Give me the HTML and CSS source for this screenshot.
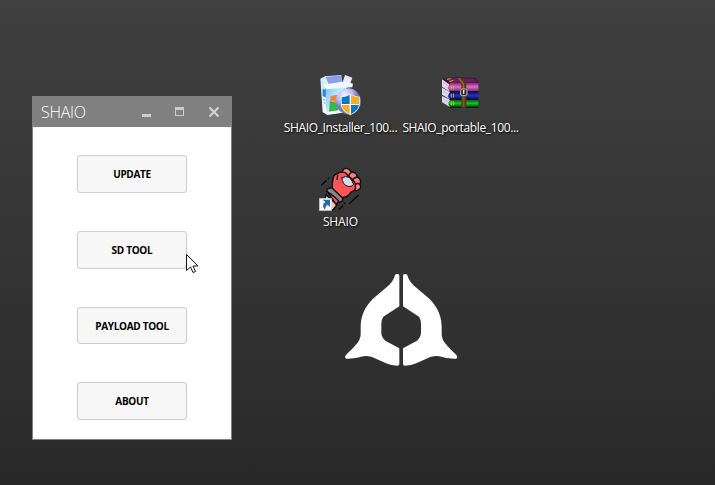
FILE: index.html
```html
<!DOCTYPE html>
<html lang="en">
<head>
<meta charset="utf-8">
<title>SHAIO</title>
<link rel="stylesheet" href="styles.css">
</head>
<body>
<main class="desktop">
  <section class="window">
    <header class="titlebar">
      <h1 class="title">SHAIO</h1>
      <svg class="controls" width="80" height="30" viewBox="0 0 80 30">
        <path fill="#ccc" d="M2 18h9v3H2zM35 11h9v9h-9zM36 14v5h7v-5z" fill-rule="evenodd"/>
        <path d="M69.500 11.500l9 9m0-9l-9 9" stroke="#d2d2d2" stroke-width="2.200"/>
      </svg>
    </header>
    <div class="actions">
      <button class="action">UPDATE</button>
      <button class="action">SD TOOL</button>
      <button class="action short">PAYLOAD TOOL</button>
      <button class="action">ABOUT</button>
    </div>
  </section>

  <figure class="item installer">
    <svg width="60" height="50" viewBox="0 0 180 150">
      <defs>
        <linearGradient id="box" x2="1" y2="1"><stop stop-color="#67b9fa"/><stop offset=".5" stop-color="#c5e9ff"/><stop offset="1" stop-color="#72b7ee"/></linearGradient>
        <linearGradient id="side" y2="1" x2="0"><stop stop-color="#c6e6fa"/><stop offset="1" stop-color="#f8fcff"/></linearGradient>
        <radialGradient id="disc" cx=".35" cy=".25"><stop stop-color="#f4f3ff"/><stop offset=".65" stop-color="#b5b8ed"/><stop offset="1" stop-color="#777cbb"/></radialGradient>
      </defs>
      <path fill="#d8eefc" d="M31 32l14-7 49-4 2 25-58 9z"/>
      <path fill="#8d9be9" d="M47 27l45-5 3 20-38 9z"/>
      <path fill="#e8e9ff" d="M97 46l8-25 22 8-9 25z"/>
      <path fill="url(#side)" d="M31 33l14 19 7 88-14-7z"/>
      <path fill="url(#box)" d="M45 52l64-9v88l-58 9z"/>
      <path fill="#edf8ff" d="M39 50l66-10 24 7-2 11-78 6z"/>
      <path fill="#2187dc" d="M38 62l9 4v22l-9-4z"/>
      <path fill="#6cbcec" d="M39 92l7 3v4l-7-3zm1 9l6 3v4l-6-3z"/>
      <path fill="#f68335" d="M62 84l20-4v23l-22-5z"/>
      <path fill="#36b849" d="M59 99l22 5 4 27-28 2z"/>
      <path fill="#f4fbff" d="M50 132l48-7v9l-48 7z"/>
      <ellipse cx="115" cy="100" rx="38" ry="39" fill="url(#disc)"/>
      <path fill="#fff" d="M93 86q17-1 27-9 12 8 29 9v25q-3 19-28 31-26-13-28-31z"/>
      <path fill="#0878c9" d="M95 88q15-2 24-8v28H95zm28 23h24q-3 17-24 28z"/>
      <path fill="#f5ad22" d="M123 80q11 7 24 8v20h-24zM95 111h24v28q-22-12-24-28z"/>
    </svg>
    <figcaption class="caption">SHAIO_Installer_100...</figcaption>
  </figure>

  <figure class="item archive">
    <svg width="60" height="50" viewBox="0 0 180 150">
      <defs>
        <linearGradient id="purple" y2="1" x2="0"><stop stop-color="#8d267e"/><stop offset=".45" stop-color="#d86ec8"/><stop offset="1" stop-color="#71205f"/></linearGradient>
        <linearGradient id="blue" y2="1" x2="0"><stop stop-color="#101066"/><stop offset=".5" stop-color="#2030dc"/><stop offset="1" stop-color="#080846"/></linearGradient>
        <linearGradient id="green" y2="1" x2="0"><stop stop-color="#064d09"/><stop offset=".5" stop-color="#13cc20"/><stop offset="1" stop-color="#064707"/></linearGradient>
      </defs>
      <path fill="#40133c" d="M36 33l27-5 72 1 12 15-87 7z"/>
      <path fill="#692058" d="M45 33l22-4 66 3 8 11-79 1z"/>
      <path fill="#ddd8f0" d="M36 34l24 17v20l-24-15zM36 59l24 13v22l-24-14zM36 84l24 11v22l-24-14z"/>
      <path stroke="#aaa4be" stroke-width="1.500" d="M39 44l20 15M39 68l20 13M39 92l20 13"/>
      <path fill="url(#purple)" d="M60 45h85v26H60l-7-12z"/>
      <path fill="url(#blue)" d="M60 72h85v22H60l-7-9z"/>
      <path fill="url(#green)" d="M60 95h85v22H60l-6-9z"/>
      <path stroke="#111" stroke-width="3" d="M58 71h87M58 94h87M59 118h86"/>
      <path stroke="#d0b530" stroke-width="3" d="M64 53v12M70 53v12M64 77v12M70 77v12M64 99v13M70 99v13M51 34l11-2M58 41l12-4"/>
      <path fill="#5a3412" d="M80 30l12-1 17 15v75H94V48z"/>
      <path fill="#96642c" d="M84 31l5-1 14 17v71h-5V49z"/>
      <rect x="92" y="63" width="19" height="20" rx="5" fill="#302f2b" stroke="#c4c0ad" stroke-width="3"/>
      <path stroke="#f2eee1" stroke-width="4" d="M101 66v11"/>
      <path stroke="#3d2511" stroke-width="2" stroke-dasharray="2 3" d="M101 85v32"/>
    </svg>
    <figcaption class="caption">SHAIO_portable_100...</figcaption>
  </figure>

  <figure class="item shortcut">
    <svg width="60" height="50" viewBox="0 0 180 150">
      <g transform="translate(18 6)" stroke="#090909" stroke-width="4" stroke-linejoin="round" stroke-linecap="round">
        <path d="M17 63l13-13M37 43l1-1M70 136l10-10M85 119l2-2M100 119l27-25"/>
        <path fill="#f7c29b" d="M30 92l33 30-12 16H20z"/>
        <path fill="#ff5058" d="M38 88l10-10 27 28-15 15z"/>
        <path fill="#858388" d="M32 82q2-12 18-10l30 29q2 13-11 14-3-8-10-13-12-11-27-20z"/>
        <path fill="#ff7d7f" d="M78 30q1-18 14-17 16 3 12 22l-10 10z"/>
        <path fill="#ff7d7f" d="M98 34q7-14 19-7 12 8 1 24l-10 4z"/>
        <path fill="#ff7d7f" d="M108 50q9-15 21-8 11 12-3 24l-10 2z"/>
        <path fill="#ff7d7f" d="M114 64q11-10 18-2 7 12-9 18l-12-2z"/>
        <path fill="#ff5458" d="M49 73q-1-16 3-34 4-8 13-10 7-7 23-3 9 7 8 13 11 1 14 11 10 4 8 16 4 12-13 18-5 13-26 17z"/>
        <path fill="#d9d8eb" stroke-width="3" d="M78 41q10-6 22-1 10 12 13 21-4 6-14 7-11-1-16-10-7-9-5-17z"/>
        <path d="M65 35l-2 11" fill="none"/>
      </g>
      <path fill="#f8f9fc" stroke="#c6c6c6" d="M28 109h37v37H28z"/>
      <path fill="#2866ae" d="M38 113h22v22l-7-7q-8 4-7 15-14-12 0-23z"/>
    </svg>
    <figcaption class="caption plain">SHAIO</figcaption>
  </figure>

  <svg class="emblem" width="130" height="110" viewBox="0 0 390 330">
    <g fill="#fff">
      <path id="half" d="M193 32V124L145 155Q139 163 139 177V204Q140 218 151 227L193 250V297Q193 302 187 302Q168 302 153 295L123 281Q104 270 85 274Q60 282 34 281Q27 278 33 270C57 246 77 230 77 207V184C77 145 98 114 121 95L152 69Q174 53 180 31Q182 26 188 27Q193 27 193 32Z"/>
      <use href="#half" transform="translate(397 0) scale(-1 1)"/>
    </g>
  </svg>

  <svg class="cursor" width="13" height="21" viewBox="0 0 13 21">
    <path fill="#fff" stroke="#15151f" d="M.5.500v16l4-3.500 2.500 5.500 2.500-1-2.500-5.500h5z"/>
  </svg>
</main>
</body>
</html>
```
FILE: styles.css
```css
* { box-sizing: border-box; }

body { margin: 0; font-family: "Open Sans", "Noto Sans", sans-serif; }

.desktop {
  position: relative;
  width: 715px;
  height: 485px;
  overflow: hidden;
  background: linear-gradient(#404040, #363636 45%, #292929);
}

.window {
  position: absolute;
  left: 32px;
  top: 96px;
  width: 200px;
  height: 344px;
  border: 1px solid #808080;
  background: #fff;
}

.titlebar {
  display: flex;
  justify-content: space-between;
  height: 30px;
  padding: 0 11px 0 8px;
  background: #808080;
}

.title {
  margin: 0;
  color: #fff;
  font-size: 16px;
  font-weight: 300;
  line-height: 31px;
  letter-spacing: -0.3px;
}

.controls { flex: none; margin-top: -1px; }

.actions {
  display: flex;
  flex-direction: column;
  align-items: center;
  gap: 38px;
  padding-top: 28px;
}

.action {
  width: 110px;
  height: 38px;
  padding: 0;
  border: 1px solid #ccc;
  border-radius: 3px;
  background: #f7f7f7;
  color: #000;
  font: 700 10px/36px "Open Sans", "Noto Sans", sans-serif;
  letter-spacing: -0.3px;
}

.action.short { height: 37px; line-height: 36px; }

.item {
  position: absolute;
  display: flex;
  flex-direction: column;
  align-items: center;
  width: 120px;
  margin: 0;
}

.installer { left: 280px; top: 68px; }
.archive { left: 400px; top: 68px; }
.shortcut { left: 280px; top: 162px; }

.caption {
  padding: 1px 0 0 1px;
  color: #fff;
  font-size: 12px;
  line-height: 18px;
  letter-spacing: -0.36px;
  white-space: nowrap;
  text-shadow: 1px 1px 2px #000;
}

.caption.plain { letter-spacing: -0.1px; }

.emblem { position: absolute; left: 335px; top: 265px; }

.cursor { position: absolute; left: 186px; top: 254px; }
```
